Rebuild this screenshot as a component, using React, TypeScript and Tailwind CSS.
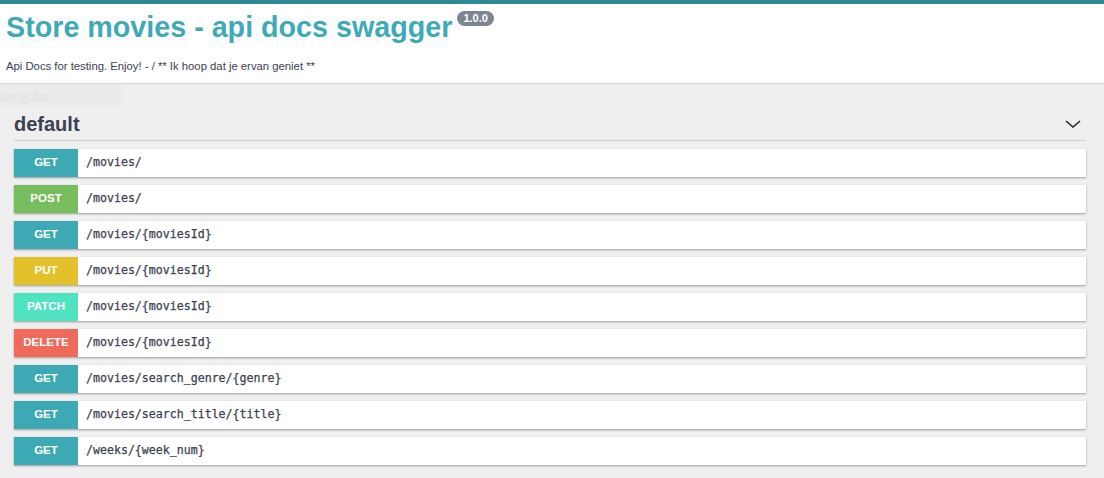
const ops = [
  { method: "GET", path: "/movies/" },
  { method: "POST", path: "/movies/" },
  { method: "GET", path: "/movies/{moviesId}" },
  { method: "PUT", path: "/movies/{moviesId}" },
  { method: "PATCH", path: "/movies/{moviesId}" },
  { method: "DELETE", path: "/movies/{moviesId}" },
  { method: "GET", path: "/movies/search_genre/{genre}" },
  { method: "GET", path: "/movies/search_title/{title}" },
  { method: "GET", path: "/weeks/{week_num}" },
];

const badgeColor: Record<string, string> = {
  GET: "bg-[#3ca9b5]",
  POST: "bg-[#78bd5e]",
  PUT: "bg-[#e4c12a]",
  PATCH: "bg-[#50e3c2]",
  DELETE: "bg-[#ef6a5b]",
};

const Operation = ({ method, path }: { method: string; path: string }) => {
  return (
    <div className="flex h-[28px] items-center bg-white shadow-[0_1px_2px_rgba(0,0,0,0.35)]">
      <div
        className={`flex h-full w-[64px] items-center justify-center text-[11.5px] font-bold text-white ${badgeColor[method]}`}
      >
        {method}
      </div>
      <span className="ml-[8px] font-['DejaVu_Sans_Mono',monospace] text-[11.6px] text-[#3b4151] [-webkit-text-stroke:0.25px_#3b4151]">
        {path}
      </span>
    </div>
  );
};

export default function App() {
  return (
    <div className="relative min-h-[478px] bg-[#efefef] font-['Liberation_Sans',Arial,sans-serif]">
      <div className="h-[4px] bg-[#2d8a97]" />
      <header className="border-b border-[#d6d6d6] bg-white px-[6px] pt-[5px] pb-[9px]">
        <div className="flex items-start">
          <h1 className="text-[28.7px] leading-[36px] font-bold text-[#3eaab8]">
            Store movies - api docs swagger
          </h1>
          <span className="mt-[2px] ml-[5px] rounded-full bg-[#7d8492] px-[6px] text-[11px] leading-[15px] font-bold text-white">
            1.0.0
          </span>
        </div>
        <p className="mt-[13px] text-[11.3px] leading-[16px] text-[#3b4151]">
          Api Docs for testing. Enjoy! - / ** Ik hoop dat je ervan geniet **
        </p>
      </header>

      <div className="absolute top-[84px] left-0 h-[22px] w-[124px] overflow-hidden bg-[#ebebed]">
        <span className="font-['Open_Sans',sans-serif] text-[13px] leading-[22px] text-[#e0e0e2]">
          tangular
        </span>
      </div>

      <main className="pt-[28px] pr-[18px] pb-[14px] pl-[14px]">
        <div className="flex items-center justify-between border-b border-[#cfcfcf] pb-[4px]">
          <h2 className="text-[20px] leading-[24px] font-bold text-[#3b4151]">default</h2>
          <svg width="20" height="20" viewBox="0 0 20 20" className="mr-[3px]">
            <path d="M3 7 L10 13 L17 7" fill="none" stroke="#222" strokeWidth="1.5" />
          </svg>
        </div>
        <div className="mt-[8px] flex flex-col gap-[8px]">
          {ops.map((op, i) => (
            <Operation key={i} method={op.method} path={op.path} />
          ))}
        </div>
      </main>
    </div>
  );
}
